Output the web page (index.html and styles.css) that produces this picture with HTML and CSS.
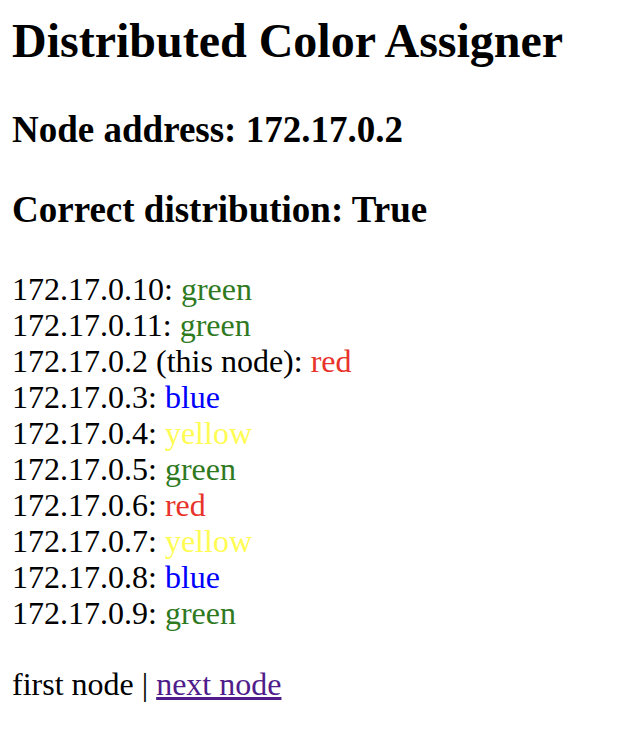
FILE: index.html
```html
<!DOCTYPE html>
<html>
<head>
<meta charset="utf-8">
<title>Distributed Color Assigner</title>
<link rel="stylesheet" href="styles.css">
</head>
<body>
<h1 class="title">Distributed Color Assigner</h1>
<h2 class="sub sub-first">Node address: 172.17.0.2</h2>
<h2 class="sub sub-second">Correct distribution: True</h2>
<div class="nodes">
  <div class="node">172.17.0.10: <span class="c-green">green</span></div>
  <div class="node">172.17.0.11: <span class="c-green">green</span></div>
  <div class="node">172.17.0.2 (this node): <span class="c-red">red</span></div>
  <div class="node">172.17.0.3: <span class="c-blue">blue</span></div>
  <div class="node">172.17.0.4: <span class="c-yellow">yellow</span></div>
  <div class="node">172.17.0.5: <span class="c-green">green</span></div>
  <div class="node">172.17.0.6: <span class="c-red">red</span></div>
  <div class="node">172.17.0.7: <span class="c-yellow">yellow</span></div>
  <div class="node">172.17.0.8: <span class="c-blue">blue</span></div>
  <div class="node">172.17.0.9: <span class="c-green">green</span></div>
</div>
<div class="nav">first node | <a class="nav-link" href="#next">next node</a></div>
</body>
</html>
```

FILE: styles.css
```css
html, body {
  margin: 0;
  padding: 0;
  background: #ffffff;
}
body {
  padding: 0 12px;
  font-family: "Liberation Serif", "Times New Roman", serif;
  color: #000000;
}
.title {
  font-size: 48px;
  line-height: 56px;
  font-weight: bold;
  margin: 13px 0 0;
}
.sub {
  font-size: 37px;
  line-height: 42px;
  font-weight: bold;
  margin: 0;
}
.sub-first {
  margin-top: 40px;
}
.sub-second {
  margin-top: 38px;
}
.nodes {
  margin-top: 40px;
  font-size: 32px;
  line-height: 36px;
}
.nav {
  margin-top: 35px;
  font-size: 32px;
  line-height: 36px;
}
.nav-link {
  color: #4f1d8b;
  text-decoration: underline;
}
.c-green { color: #2f7a1f; }
.c-red { color: #e8332a; }
.c-blue { color: #0000ff; }
.c-yellow { color: #fffd54; }
```
